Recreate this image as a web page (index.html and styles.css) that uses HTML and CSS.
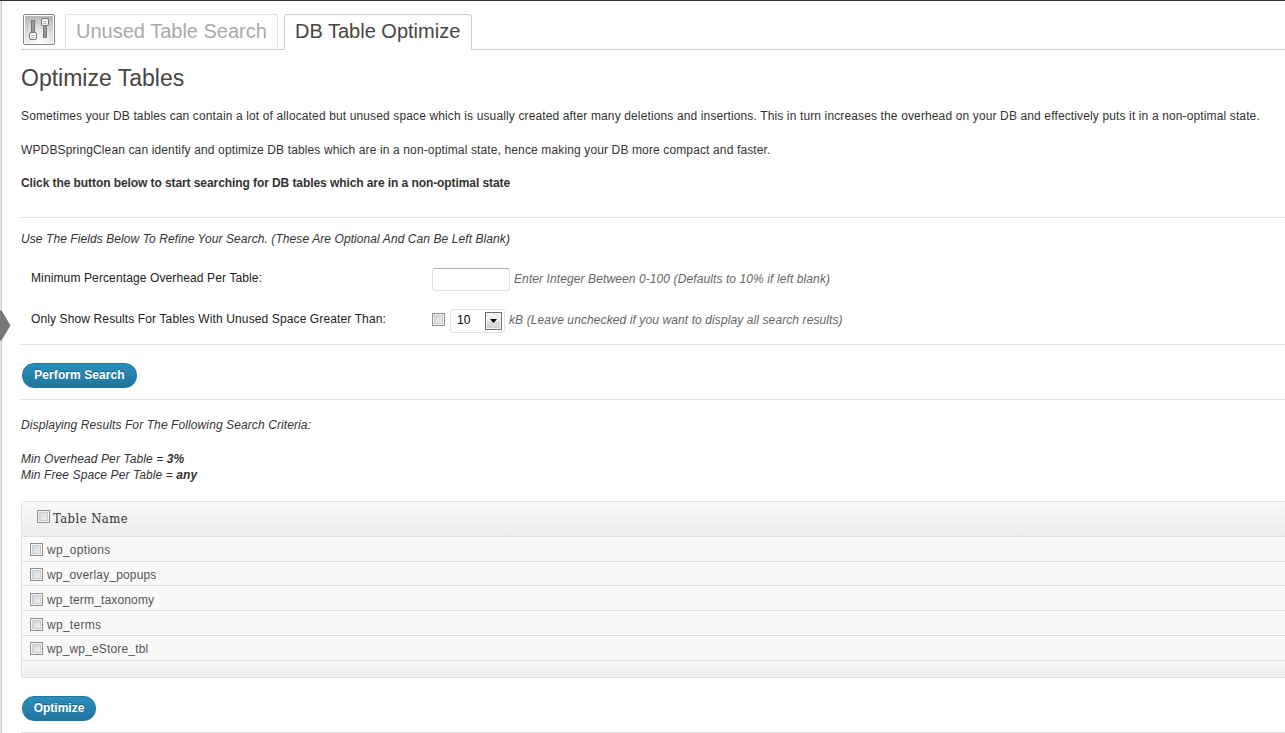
FILE: index.html
```html
<!DOCTYPE html>
<html lang="en">
<head>
<meta charset="utf-8">
<title>DB Table Optimize</title>
<link rel="stylesheet" href="styles.css">
</head>
<body>
<div class="menu-edge"></div>
<svg class="menu-arrow" width="11" height="31" viewBox="0 0 11 31"><path d="M0 0.5H1.5L10.5 15.5L1.5 30.5H0Z"/></svg>
<main class="wrap">
  <nav class="tabs">
    <svg class="screen-icon" width="34" height="34" viewBox="0 0 34 34">
      <defs><radialGradient id="g" cx=".5" cy="1" r="1"><stop offset="0" stop-color="#fff"/><stop offset=".4" stop-color="#ececec"/><stop offset="1" stop-color="#b8b8b8"/></radialGradient></defs>
      <rect x="1.5" y="1.5" width="31" height="30" rx="1.5" fill="#fff" stroke="#858585"/>
      <rect x="3" y="3" width="28" height="27" fill="url(#g)"/>
      <g stroke="#777" fill="#999">
        <rect x="9.500" y="7.500" width="3" height="13"/>
        <rect x="21.500" y="11.500" width="3" height="13"/>
        <g fill="#fafafa"><rect x="7.500" y="19.500" width="7" height="7" rx="1.500"/><rect x="19.500" y="5.500" width="7" height="7" rx="1.500"/></g>
        <path d="M9 22.500H13M9 24.500H13M21 8.500H25M21 10.500H25" stroke="#bbb"/>
      </g>
    </svg>
    <a class="tab"><span>Unused Table Search</span></a>
    <a class="tab active"><span>DB Table Optimize</span></a>
  </nav>
  <h2>Optimize Tables</h2>
  <p class="first"><span class="loose">Sometimes your DB tables can contain a lot of allocated but unused space which is usually created after many deletions and insertions. This in turn increases the overhead on your DB and effectively puts it in a non-optimal state.</span></p>
  <p><span class="loose">WPDBSpringClean can identify and optimize DB tables which are in a non-optimal state, hence making your DB more compact and faster.</span></p>
  <p class="strong"><span>Click the button below to start searching for DB tables which are in a non-optimal state</span></p>
  <form class="filters">
    <em class="intro">Use The Fields Below To Refine Your Search. (These Are Optional And Can Be Left Blank)</em>
    <div class="field first-field"><label>Minimum Percentage Overhead Per Table:</label><span class="textbox"></span><em class="hint hint-a">Enter Integer Between 0-100 (Defaults to 10% if left blank)</em></div>
    <div class="field"><label>Only Show Results For Tables With Unused Space Greater Than:</label><span class="check"></span><span class="select">10<span class="drop"><svg width="7" height="4" viewBox="0 0 7 4"><path d="M0 0H7L3.500 4Z"/></svg></span></span><em class="hint hint-b">kB (Leave unchecked if you want to display all search results)</em></div>
  </form>
  <div class="action"><button class="button search">Perform Search</button></div>
  <section class="criteria">
    <p>Displaying Results For The Following Search Criteria:</p>
    <div>Min Overhead Per Table = <b>3%</b></div>
    <div>Min Free Space Per Table = <b>any</b></div>
  </section>
  <div class="table">
    <div class="thead"><span class="check"></span><span>Table Name</span></div>
    <div class="row"><span class="check raised"></span><span class="wide">wp_options</span></div>
    <div class="row short"><span class="check"></span><span>wp_overlay_popups</span></div>
    <div class="row"><span class="check"></span><span class="lower">wp_term_taxonomy</span></div>
    <div class="row"><span class="check"></span><span class="wide lower">wp_terms</span></div>
    <div class="row"><span class="check raised"></span><span>wp_wp_eStore_tbl</span></div>
    <div class="tfoot"></div>
  </div>
  <div class="action last"><button class="button optimize">Optimize</button></div>
</main>
</body>
</html>
```
FILE: styles.css
```css
* { box-sizing: border-box; }
body { margin: 0; height: 733px; overflow: hidden; background: #fff; border-top: 1px solid #333; color: #333; font: 12px/16px "Liberation Sans", Arial, sans-serif; }
span, em, label { white-space: nowrap; }
.menu-edge { position: absolute; left: 0; top: 1px; width: 2px; height: 732px; background: #e6e6e6; border-right: 1px solid #ccc; }
.menu-arrow { position: absolute; left: 0; top: 310px; fill: #777; }
.wrap { padding-left: 21px; width: 1285px; }
.tabs { display: flex; height: 49px; border-bottom: 1px solid #ccc; padding-top: 13px; }
.screen-icon { margin: -1px 9px 0 1px; }
.tab { height: 35px; border: 1px solid #dfdfdf; border-bottom: 0; border-radius: 3px 3px 0 0; padding: 0 10px; width: 213px; font-size: 20px; line-height: 33px; color: #aaa; margin-right: 6px; }
.tab.active { width: 188px; height: 36px; background: #fff; border-color: #ccc; color: #464646; }
h2 { margin: 13px 0 0; font-size: 23px; font-weight: 400; line-height: 31px; color: #464646; }
p { margin: 0 0 18px; }
p.first { margin-top: 14px; }
.loose { letter-spacing: .131px; }
p + p.strong { margin: -1px 0 26px; font-weight: 700; letter-spacing: -.08px; }
.filters { height: 128px; border-top: 1px solid #dfdfdf; border-bottom: 1px solid #dfdfdf; padding-top: 13px; }
.intro { display: block; letter-spacing: .081px; }
.field { display: flex; align-items: center; height: 41px; padding-left: 10px; color: #222; }
.first-field { margin-top: 11px; }
.field label { width: 401px; margin-top: -1px; letter-spacing: .12px; }
.textbox { width: 78px; height: 23px; margin-top: 2px; border: 1px solid #dfdfdf; border-top-color: #aaa; border-radius: 3px; }
.hint { color: #666; letter-spacing: .1px; }
.hint-a { margin-left: 4px; }
.hint-b { margin-left: 4px; }
.check { display: block; flex: none; width: 13px; height: 13px; border: 1px solid #8e8f8f; box-shadow: inset 0 0 0 1px #f4f4f4, inset 0 0 0 2px #c8cacb; background: linear-gradient(135deg, #cbcfd5, #f6f6f6); }
.select { display: flex; width: 55px; height: 24px; border: 1px solid #dfdfdf; border-radius: 3px; margin: 2px 0 0 5px; padding-left: 6px; line-height: 21px; color: #000; letter-spacing: .2px; }
.drop { margin: 2px 2px 0 auto; width: 17px; height: 18px; border: 1px solid #707070; background: linear-gradient(#f2f2f2 50%, #ddd 50%, #cfcfcf); box-shadow: inset 0 0 0 1px #f5f5f5; display: flex; align-items: center; justify-content: center; }
.field .check { margin: -1px 0 0; }
.action { height: 55px; padding: 18px 0 0 1px; border-bottom: 1px solid #dfdfdf; }
.button { display: block; height: 25px; border: 1px solid #21759b; border-radius: 12px; padding: 0 0 2px; background: linear-gradient(#2a8fbd, #21759b); color: #fff; font: bold 12px/20px "Liberation Sans", Arial, sans-serif; letter-spacing: .08px; text-shadow: 0 -1px 0 rgba(0,0,0,.3); text-align: center; }
.search { width: 115px; }
.optimize { width: 74px; letter-spacing: 0; }
.criteria { padding-top: 17px; height: 101px; font-style: italic; letter-spacing: .1px; }
.table { height: 177px; border: 1px solid #dfdfdf; border-right: 0; border-radius: 3px 0 0 3px; background: #f9f9f9; overflow: hidden; }
.thead { display: flex; align-items: center; height: 35px; border-bottom: 1px solid #dfdfdf; padding-left: 15px; background: linear-gradient(#f9f9f9, #ececec); font: 13px/18px "DejaVu Serif Condensed", "DejaVu Serif", Georgia, serif; font-stretch: condensed; letter-spacing: .42px; color: #333; }
.thead .check { margin: -5px 3px 0 0; }
.row { display: flex; align-items: center; height: 25px; padding-left: 8px; border-top: 1px solid #fff; border-bottom: 1px solid #dfdfdf; color: #555; letter-spacing: .16px; }
.row .wide { letter-spacing: .28px; }
.row.short { height: 24px; }
.row .check { margin: 1px 4px 0 0; }
.row .raised { margin-top: -1px; }
.row span + span { padding-top: 1px; }
.row span + span.lower { padding-top: 2px; }
.tfoot { height: 18px; background: linear-gradient(#f9f9f9, #ececec); }
```
